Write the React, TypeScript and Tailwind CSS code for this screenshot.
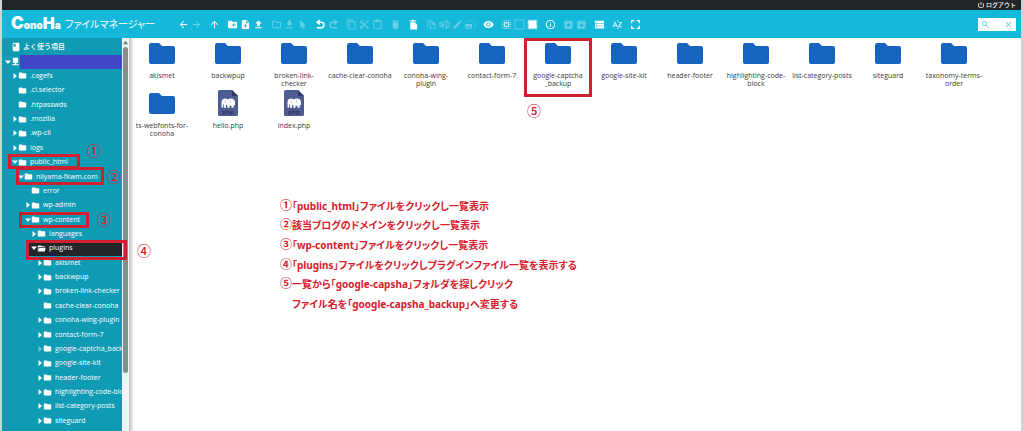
import type { ReactNode } from "react";
import {
  MdArchive,
  MdArrowBack,
  MdArrowForward,
  MdArrowUpward,
  MdContentCopy,
  MdContentCut,
  MdContentPaste,
  MdCreateNewFolder,
  MdDelete,
  MdEdit,
  MdFileDownload,
  MdFileUpload,
  MdFolder,
  MdFullscreen,
  MdInfoOutline,
  MdNoteAdd,
  MdOutlineFolder,
  MdPhotoSizeSelectLarge,
  MdPowerSettingsNew,
  MdSearch,
  MdClose,
  MdSelectAll,
  MdSortByAlpha,
  MdUnarchive,
  MdVisibility,
  MdBook,
} from "react-icons/md";

function Glyph({ children }: { children: ReactNode }) {
  return (
    <svg viewBox="0 0 24 24" width="1em" height="1em" fill="currentColor" aria-hidden="true">
      {children}
    </svg>
  );
}

const undoPath =
  "M13.5 5.5A7.500 7.500 0 0 1 13.5 20.5H4V17.300H13.5A4.200 4.200 0 0 0 13.5 8.900H9.300L11.4 11L9.3 13.2L2 7.200L9.3 1.200L11.4 3.300L9.300 5.500Z";

const Undo = () => (
  <Glyph>
    <path d={undoPath} />
  </Glyph>
);
const Redo = () => (
  <Glyph>
    <path d={undoPath} transform="matrix(-1 0 0 1 24 0)" />
  </Glyph>
);
const Pointer = () => (
  <Glyph>
    <path d="M7 2v18l4.400-4.200 3 6.700 3-1.300-3-6.600H20z" />
  </Glyph>
);
const EmptyFolder = () => (
  <Glyph>
    <path d="M5 7h10l5 5v11H5z" />
    <path d="M3 3h5l1-1.500h4L14 3h4v2.500H3z" />
  </Glyph>
);
const Duplicate = () => (
  <Glyph>
    <path d="M3 2h11v2H5v14H3zM8 6h8l5 5v11H8zM10 8v12h9v-7h-5V8z" fillRule="evenodd" />
  </Glyph>
);
const Rename = () => (
  <Glyph>
    <path d="M1 6h11v2H3v8h9v2H1zM17 6h6v12h-6v-2h4V8h-4zM13 2h6v2h-2v16h2v2h-6v-2h2V4h-2zM5 10h7v4H5z" />
  </Glyph>
);
const SelectNone = () => (
  <Glyph>
    <rect x="2" y="2" width="20" height="20" fill="none" stroke="currentColor" strokeWidth="3" strokeDasharray="4 2" />
  </Glyph>
);
const SelectInvert = () => (
  <Glyph>
    <rect x="4" y="4" width="16" height="16" />
    <rect x="3" y="3" width="18" height="18" fill="none" stroke="currentColor" strokeWidth="3" strokeDasharray="2.500 2" />
  </Glyph>
);
const ListRows = () => (
  <Glyph>
    <path d="M2 4h4v4.500H2zM7 4h15v4.500H7zM2 10h4v4.500H2zM7 10h15v4.500H7zM2 16h4v4.500H2zM7 16h15v4.500H7z" />
  </Glyph>
);
const Host = () => (
  <Glyph>
    <path d="M5 2h14v14H5zM10 16h4v3h7v3H3v-3h7z" />
  </Glyph>
);
const OpenedFolder = () => (
  <Glyph>
    <path d="M19 20H4a2 2 0 0 1-2-2V6a2 2 0 0 1 2-2h6l2 2h7a2 2 0 0 1 2 2H4v10l2.140-8h17.070l-2.280 8.500c-.23.87-1.010 1.500-1.930 1.500z" />
  </Glyph>
);

type Tool = { label: string; icon: ReactNode; off?: boolean };

const toolGroups: Tool[][] = [
  [
    { label: "戻る", icon: <MdArrowBack /> },
    { label: "進む", icon: <MdArrowForward />, off: true },
  ],
  [{ label: "上へ", icon: <MdArrowUpward /> }],
  [
    { label: "新規フォルダ", icon: <MdCreateNewFolder /> },
    { label: "新規ファイル", icon: <MdNoteAdd /> },
    { label: "アップロード", icon: <MdFileUpload /> },
  ],
  [
    { label: "開く", icon: <MdOutlineFolder />, off: true },
    { label: "ダウンロード", icon: <MdFileDownload />, off: true },
    { label: "選択", icon: <Pointer />, off: true },
  ],
  [
    { label: "元に戻す", icon: <Undo /> },
    { label: "やり直す", icon: <Redo />, off: true },
  ],
  [
    { label: "コピー", icon: <MdContentCopy />, off: true },
    { label: "切り取り", icon: <MdContentCut />, off: true },
    { label: "貼り付け", icon: <MdContentPaste />, off: true },
  ],
  [{ label: "削除", icon: <MdDelete />, off: true }],
  [{ label: "フォルダを空にする", icon: <EmptyFolder /> }],
  [
    { label: "複製", icon: <Duplicate />, off: true },
    { label: "名前を変更", icon: <Rename />, off: true },
    { label: "編集", icon: <MdEdit />, off: true },
    { label: "サイズ変更", icon: <MdPhotoSizeSelectLarge />, off: true },
  ],
  [{ label: "プレビュー", icon: <MdVisibility /> }],
  [
    { label: "すべて選択", icon: <MdSelectAll /> },
    { label: "選択解除", icon: <SelectNone />, off: true },
    { label: "選択を反転", icon: <SelectInvert /> },
  ],
  [{ label: "情報", icon: <MdInfoOutline /> }],
  [
    { label: "展開", icon: <MdArchive />, off: true },
    { label: "圧縮", icon: <MdUnarchive />, off: true },
  ],
  [{ label: "リスト表示", icon: <ListRows /> }],
  [{ label: "並べ替え", icon: <MdSortByAlpha /> }],
  [{ label: "全画面", icon: <MdFullscreen className="scale-140" /> }],
];

type Node = { name: string; depth: 0 | 1 | 2 | 3 | 4; arrow?: "open" | "closed" | "dim" };

const tree: Node[] = [
  { name: ".cagefs", depth: 0, arrow: "closed" },
  { name: ".cl.selector", depth: 0 },
  { name: ".htpasswds", depth: 0 },
  { name: ".mozilla", depth: 0, arrow: "closed" },
  { name: ".wp-cli", depth: 0, arrow: "closed" },
  { name: "logs", depth: 0, arrow: "closed" },
  { name: "public_html", depth: 0, arrow: "open" },
  { name: "niiyama-fkwm.com", depth: 1, arrow: "open" },
  { name: "error", depth: 2 },
  { name: "wp-admin", depth: 2, arrow: "closed" },
  { name: "wp-content", depth: 2, arrow: "open" },
  { name: "languages", depth: 3, arrow: "closed" },
  { name: "plugins", depth: 3, arrow: "open" },
  { name: "akismet", depth: 4, arrow: "closed" },
  { name: "backwpup", depth: 4, arrow: "closed" },
  { name: "broken-link-checker", depth: 4, arrow: "closed" },
  { name: "cache-clear-conoha", depth: 4 },
  { name: "conoha-wing-plugin", depth: 4, arrow: "closed" },
  { name: "contact-form-7", depth: 4, arrow: "closed" },
  { name: "google-captcha_backup", depth: 4, arrow: "dim" },
  { name: "google-site-kit", depth: 4, arrow: "closed" },
  { name: "header-footer", depth: 4, arrow: "closed" },
  { name: "highlighting-code-block", depth: 4, arrow: "closed" },
  { name: "list-category-posts", depth: 4, arrow: "closed" },
  { name: "siteguard", depth: 4, arrow: "closed" },
];

const indent = ["pl-[10px]", "pl-[16px]", "pl-[23px]", "pl-[29px]", "pl-[35px]"];

function Arrow({ state }: { state?: "open" | "closed" | "dim" }) {
  return (
    <svg viewBox="0 0 6 6" className={`h-[6px] w-[6px] shrink-0 ${state === "dim" ? "opacity-40" : ""}`} aria-hidden="true">
      {state === "open" && <path d="M0 1.500h6L3 5z" fill="white" />}
      {(state === "closed" || state === "dim") && <path d="M1.500 0v6L5 3z" fill="white" />}
    </svg>
  );
}

function TreeRow({ node }: { node: Node }) {
  const active = node.name === "plugins";
  return (
    <li className={`flex min-h-0 items-center ${active ? "ml-[26px] bg-[#212529] pl-[3px]" : indent[node.depth]}`}>
      <a href="#" className="flex flex-1 items-center whitespace-nowrap">
        <Arrow state={node.arrow} />
        <span className="mr-[3px] text-[9px]">{active ? <OpenedFolder /> : <MdFolder />}</span>
        {node.name}
      </a>
      {active && <span className="mr-1 h-[5px] w-px bg-gray-400" />}
    </li>
  );
}

function FolderArt() {
  return (
    <svg viewBox="0 0 26 21" className="h-[21px] w-[26px]" aria-hidden="true">
      <path d="M2 0h8l3 3h11a2 2 0 0 1 2 2v14a2 2 0 0 1-2 2H2a2 2 0 0 1-2-2V2a2 2 0 0 1 2-2z" fill="#1565c0" />
    </svg>
  );
}

function PhpArt() {
  return (
    <svg viewBox="0 0 20 26" className="h-[26px] w-[20px]" aria-hidden="true">
      <path d="M1.500 0H14l6 6v18.500a1.500 1.500 0 0 1-1.500 1.500h-17A1.500 1.500 0 0 1 0 24.500v-23A1.500 1.500 0 0 1 1.500 0z" fill="#4f5b93" />
      <path d="M14 0l6 6h-6z" fill="#2f3763" />
      <path
        d="M3.500 17.500V12c0-2 1.500-3.500 3.500-3.500 1.200 0 2 .3 2.800.9.800-.6 1.800-.9 3.200-.9 2.500 0 4 1.600 4 3.800v3h-1.300v2.500h-2.200v-2h-2v2H9.300V15H8v2.800H5.800V14.500l-.8-.2v3.200z"
        fill="white"
      />
      <path d="M7.500 9.500c-.8 1.500-.6 3 .8 4M12 10c.8 1 .8 2 .2 3" fill="none" stroke="#8d94bb" strokeWidth="0.500" />
      <text x="10" y="24" textAnchor="middle" fontSize="6" fontWeight="700" fontFamily="Open Sans, sans-serif" fill="#2b3260">
        php
      </text>
    </svg>
  );
}

const files: { lines: string[]; php?: boolean }[] = [
  { lines: ["akismet"] },
  { lines: ["backwpup"] },
  { lines: ["broken-link-", "checker"] },
  { lines: ["cache-clear-conoha"] },
  { lines: ["conoha-wing-", "plugin"] },
  { lines: ["contact-form-7"] },
  { lines: ["google-captcha", "_backup"] },
  { lines: ["google-site-kit"] },
  { lines: ["header-footer"] },
  { lines: ["highlighting-code-", "block"] },
  { lines: ["list-category-posts"] },
  { lines: ["siteguard"] },
  { lines: ["taxonomy-terms-", "order"] },
  { lines: ["ts-webfonts-for-", "conoha"] },
  { lines: ["hello.php"], php: true },
  { lines: ["index.php"], php: true },
];

const steps = [
  { mark: "①", text: "「public_html」ファイルをクリックし一覧表示" },
  { mark: "②", text: "該当ブログのドメインをクリックし一覧表示" },
  { mark: "③", text: "「wp-content」ファイルをクリックし一覧表示" },
  { mark: "④", text: "「plugins」ファイルをクリックしプラグインファイル一覧を表示する" },
  { mark: "⑤", text: "一覧から「google-capsha」フォルダを探しクリック" },
  { mark: "", text: "ファイル名を「google-capsha_backup」へ変更する" },
];

const frames = [
  "left-[8px] top-[154px] h-[15px] w-[72px]",
  "left-[16px] top-[167px] h-[18px] w-[88px]",
  "left-[19px] top-[212px] h-[16px] w-[70px]",
  "left-[26px] top-[240px] h-[20px] w-[101px]",
  "left-[524px] top-[38px] h-[59px] w-[68px]",
];

const marks = [
  { text: "①", place: "left-[87px] top-[143px]" },
  { text: "②", place: "left-[107px] top-[169px]" },
  { text: "③", place: "left-[97px] top-[212px]" },
  { text: "④", place: "left-[137px] top-[243px]" },
  { text: "⑤", place: "left-[527px] top-[103px]" },
];

export default function App() {
  return (
    <div className="relative flex h-screen flex-col overflow-hidden border-l-2 border-r-3 border-[#d0d3d4] bg-white font-['Open_Sans','Noto_Sans_CJK_JP',sans-serif]">
      <div className="flex h-[10px] shrink-0 items-center justify-end bg-[#212529] pr-[5px] text-white">
        <a href="#" className="flex items-center gap-px text-[6px] leading-[8px] font-medium">
          <MdPowerSettingsNew className="text-[8px]" />
          ログアウト
        </a>
      </div>

      <header className="flex h-[28px] shrink-0 items-center bg-[#14b8d9] text-white">
        <div className="flex w-[175px] shrink-0 items-center pl-[9px]">
          <div className="flex w-[50px] items-baseline font-['Inter',sans-serif] leading-[18px] font-black">
            <span className="text-[17px]">C</span>
            <span className="text-[10px]">ono</span>
            <span className="text-[16px]">H</span>
            <span className="text-[10px]">a</span>
          </div>
          <h1 className="ml-[4px] text-[10px] leading-[14px] whitespace-nowrap [font-feature-settings:'palt']">ファイルマネージャー</h1>
        </div>
        <nav className="flex flex-1 items-center gap-[5px]" aria-label="ツールバー">
          {toolGroups.map((group, i) => (
            <div key={i} className="flex">
              {group.map((tool) => (
                <button
                  key={tool.label}
                  type="button"
                  aria-label={tool.label}
                  disabled={tool.off}
                  className={`flex h-[14px] w-[13px] items-center justify-center text-[11px] ${tool.off ? "opacity-35" : ""}`}
                >
                  {tool.icon}
                </button>
              ))}
            </div>
          ))}
        </nav>
        <label className="mr-[5px] flex h-[13px] w-[38px] items-center bg-white px-[3px] text-[9px] text-[#5cc5d6]">
          <MdSearch className="shrink-0" />
          <input type="text" aria-label="検索" className="w-0 min-w-0 flex-1 text-[8px] text-gray-700 outline-none" />
          <MdClose className="shrink-0" />
        </label>
      </header>

      <div className="flex min-h-0 flex-1">
        <aside className="flex w-[127px] shrink-0 bg-[#0f9bb4]">
          <ul className="grid h-[390px] min-w-0 flex-1 auto-rows-fr overflow-hidden pt-[2px] text-[7px] leading-[12px] text-white">
            <li className="flex items-center gap-[2px] pl-[9px] font-medium whitespace-nowrap">
              <MdBook className="text-[10px]" />
              よく使う項目
            </li>
            <li className="flex items-center pl-[3px]">
              <Arrow state="open" />
              <span className="text-[9px]">
                <Host />
              </span>
              <span className="h-[14px] flex-1 bg-[#4046c8]" />
            </li>
            {tree.map((node) => (
              <TreeRow key={node.name} node={node} />
            ))}
          </ul>
          <div className="flex w-[7px] flex-col items-center bg-[#f3f3f3]" aria-hidden="true">
            <svg viewBox="0 0 6 6" className="my-[2px] h-[5px] w-[5px]">
              <path d="M0 5h6L3 1z" fill="#777" />
            </svg>
            <div className="h-[326px] w-[5px] rounded-full bg-[#8b8b8b]" />
          </div>
        </aside>

        <main className="flex min-w-0 flex-1 flex-col shadow-[inset_5px_0_4px_-3px_#b0b0b0]">
          <ul className="grid grid-cols-[repeat(auto-fill,66px)]">
            {files.map((file) => (
              <li key={file.lines[0]} className="h-[50px] text-center text-[7px] leading-[8px] text-[#3a3a3a]">
                <div className="mb-[4px] flex h-[30px] items-center justify-center">{file.php ? <PhpArt /> : <FolderArt />}</div>
                {file.lines.map((line) => (
                  <p key={line} className="flex justify-center whitespace-nowrap">
                    {line}
                  </p>
                ))}
              </li>
            ))}
          </ul>
          <div className="mt-[58px] ml-[151px] grid h-[118px] auto-rows-fr items-center text-[10px] leading-[18px] font-bold whitespace-pre text-[#d8202c] font-['Noto_Sans','Noto_Sans_CJK_JP',sans-serif] [font-feature-settings:'palt']">
            {steps.map((step) => (
              <p key={step.text} className="flex">
                <span className="w-[12px] text-[12px]">{step.mark}</span>
                {step.text}
              </p>
            ))}
          </div>
        </main>
      </div>

      <div className="pointer-events-none absolute inset-y-0 -left-[2px] right-0 text-[#d8202c]">
        {frames.map((frame) => (
          <div key={frame} className={`absolute border-[3px] border-[#cf2030] ${frame}`} />
        ))}
        {marks.map((mark) => (
          <span key={mark.text} className={`absolute text-[14px] leading-[16px] font-medium ${mark.place}`}>
            {mark.text}
          </span>
        ))}
      </div>
    </div>
  );
}
